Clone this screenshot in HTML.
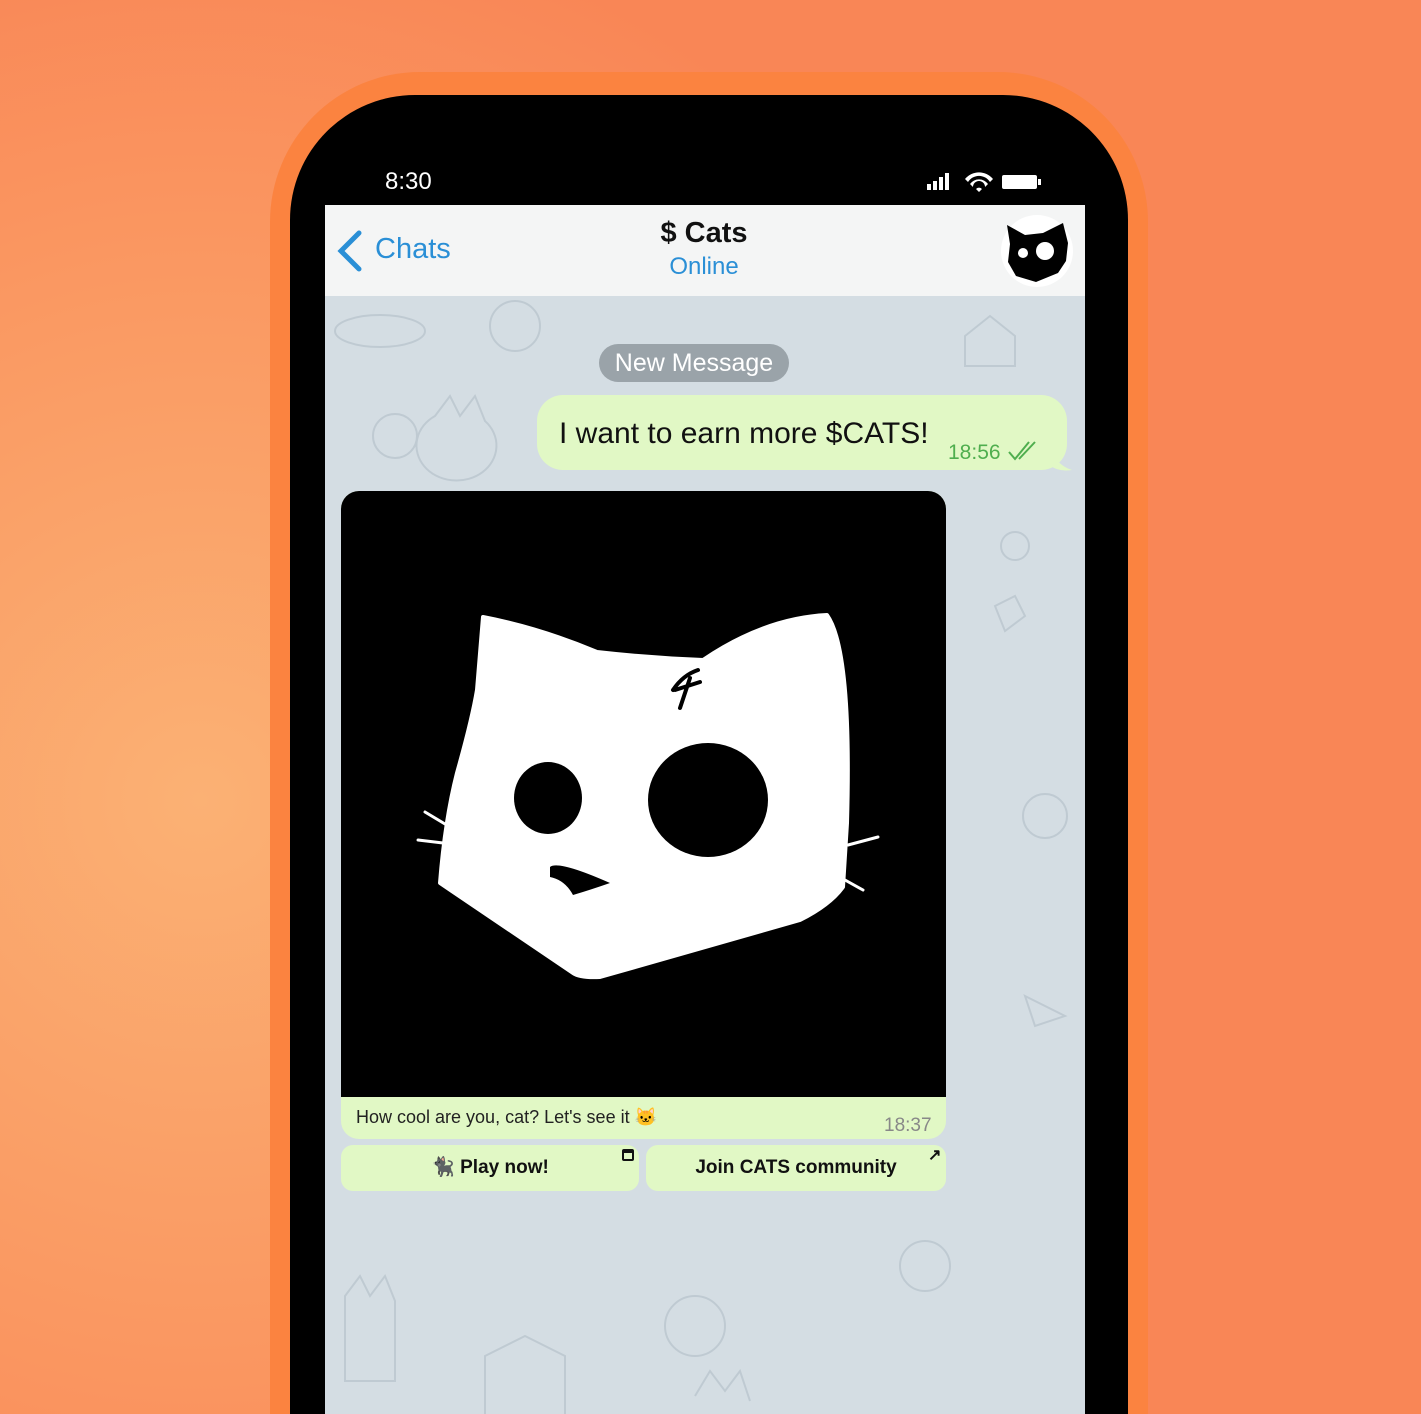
<!DOCTYPE html><html><head><meta charset="utf-8"><style>
html,body{margin:0;padding:0;width:1421px;height:1414px;overflow:hidden}
body{position:relative;font-family:"Liberation Sans",sans-serif;
background:radial-gradient(ellipse 900px 900px at 200px 800px,#fbb174 0%,#fa9a63 55%,#f98656 100%);}
.outer{position:absolute;left:270px;top:72px;width:878px;height:1342px;border-radius:150px 150px 0 0;background:#fb8340}
.phone{position:absolute;left:290px;top:95px;width:838px;height:1319px;border-radius:125px 125px 0 0;background:#000}
.screen{position:absolute;left:325px;top:205px;width:760px;height:1209px;background:#d4dde3;overflow:hidden}
.hdr{position:absolute;left:0;top:0;width:760px;height:91px;background:#f4f5f5}
.abs{position:absolute}
</style></head><body>
<div class="outer"></div>
<div class="phone"></div>
<div class="abs" style="left:385px;top:168px;color:#fff;font-size:24px">8:30</div>
<svg class="abs" style="left:925px;top:170px" width="120" height="24">
<rect x="2" y="14" width="4" height="6" fill="#fff"/><rect x="8" y="11" width="4" height="9" fill="#fff"/><rect x="14" y="7" width="4" height="13" fill="#fff"/><rect x="20" y="3" width="4" height="17" fill="#fff"/>
<path d="M40 9a18 18 0 0 1 28 0l-3 3a13 13 0 0 0-22 0z M45 14a11 11 0 0 1 18 0l-3 3a6 6 0 0 0-12 0z M51 19a4 4 0 0 1 6 0l-3 3z" fill="#fff"/>
<rect x="77" y="5" width="35" height="14" rx="2" fill="#fff"/><rect x="113" y="9" width="3" height="6" fill="#fff"/>
</svg>
<div class="screen">
<svg class="abs" style="left:0;top:91px" width="760" height="1118" opacity="0.35">
<g fill="none" stroke="#9aa9b4" stroke-width="2">
<ellipse cx="55" cy="35" rx="45" ry="16"/><circle cx="190" cy="30" r="25"/><circle cx="70" cy="140" r="22"/><path d="M110 120l15-20 10 20 15-20 10 25 a40 35 0 1 1-50-5z"/>
<path d="M640 40l25-20 25 20v30h-50z"/><circle cx="690" cy="250" r="14"/><path d="M670 310l20-10 10 20-20 15z"/>
<circle cx="370" cy="1030" r="30"/><path d="M20 1000l15-20 10 20 15-20 10 25v80h-50z"/><path d="M160 1060l40-20 40 20v60h-80z"/>
<path d="M370 1100l15-25 15 20 15-20 10 30"/><circle cx="600" cy="970" r="25"/><circle cx="720" cy="520" r="22"/><path d="M700 700l40 20-30 10z"/>
</g></svg>
<div class="hdr"></div>
<svg class="abs" style="left:10px;top:24px" width="30" height="44"><path d="M24 4L6 22l18 18" fill="none" stroke="#2a8fd6" stroke-width="5" stroke-linecap="round"/></svg>
<div class="abs" style="left:50px;top:28px;font-size:29px;color:#2a8fd6">Chats</div>
<div class="abs" style="left:0;width:758px;text-align:center;top:12px;font-size:29px;font-weight:bold;color:#111">$ Cats</div>
<div class="abs" style="left:0;width:758px;text-align:center;top:48px;font-size:24px;color:#2a8fd6">Online</div>
<div class="abs" style="left:676px;top:10px;width:72px;height:72px;border-radius:50%;background:#fff"></div>
<svg class="abs" style="left:676px;top:12px" width="72" height="72" viewBox="0 0 72 72"><path d="M6 8l18 10 18-2 20-10 5 20-2 18-8 12-22 9-20-6-8-14 2-18z" fill="#000"/><circle cx="22" cy="36" r="5" fill="#fff"/><circle cx="44" cy="34" r="9" fill="#fff"/></svg>
<div class="abs" style="left:274px;top:139px;width:190px;height:38px;border-radius:19px;background:#9aa3a9;color:#fff;font-size:25px;text-align:center;line-height:38px">New Message</div>
<div class="abs" style="left:212px;top:190px;width:530px;height:75px;border-radius:26px;background:#e1f8c5"></div>
<svg class="abs" style="left:725px;top:240px" width="25" height="26"><path d="M0 0q5 20 22 25q-15 2-22-5z" fill="#e1f8c5"/></svg>
<div class="abs" style="left:234px;top:212px;font-size:30px;color:#111">I want to earn more $CATS!</div>
<div class="abs" style="left:623px;top:236px;font-size:21px;color:#4fae4e">18:56</div>
<svg class="abs" style="left:682px;top:235px" width="32" height="22"><path d="M2 12l6 7 14-17M12 19l16-17" fill="none" stroke="#4fae4e" stroke-width="2"/></svg>
<div class="abs" style="left:16px;top:286px;width:605px;height:648px;border-radius:18px;background:#e1f8c5;overflow:hidden">
<div style="position:absolute;left:0;top:0;width:605px;height:606px;background:#000"></div>
<div style="position:absolute;left:15px;top:616px;font-size:18px;color:#222">How cool are you, cat? Let's see it 🐱</div>
<div style="position:absolute;left:543px;top:624px;font-size:19px;color:#888">18:37</div>
</div>
<div class="abs" style="left:16px;top:940px;width:298px;height:46px;border-radius:12px;background:#e1f8c5;text-align:center;line-height:46px;font-size:19px;font-weight:bold;color:#111">🐈‍⬛ Play now!</div>
<div class="abs" style="left:297px;top:944px;width:12px;height:12px;border:2px solid #111;border-top-width:4px;box-sizing:border-box;border-radius:2px"></div>
<div class="abs" style="left:321px;top:940px;width:300px;height:46px;border-radius:12px;background:#e1f8c5;text-align:center;line-height:46px;font-size:19px;font-weight:bold;color:#111">Join CATS community</div>
<div class="abs" style="left:603px;top:940px;font-size:16px;font-weight:bold;color:#111">↗</div>
</div>
<svg class="abs" style="left:0;top:0" width="1421" height="1414">
<path d="M483 617Q540 628 597 652Q650 658 703 660Q765 618 827 615Q852 650 847 823L843 887Q830 905 800 920L600 977Q580 978 573 973L440 883Q445 820 457 773Q472 720 477 690Z" fill="#fff" stroke="#fff" stroke-width="4" stroke-linejoin="round"/>
<ellipse cx="548" cy="798" rx="34" ry="36" fill="#000"/>
<ellipse cx="708" cy="800" rx="60" ry="57" fill="#000"/>
<path d="M550 867Q558 860 610 883Q590 890 573 895Q565 880 550 877Z" fill="#000"/>
<path d="M673 690q10-15 25-20M680 708l10-30M675 690l25-8" stroke="#000" stroke-width="4" fill="none" stroke-linecap="round"/>
<path d="M425 812l20 12M418 840l25 3M848 845l30-8M845 880l18 10" stroke="#fff" stroke-width="3" fill="none" stroke-linecap="round"/>
</svg>
</body></html>
